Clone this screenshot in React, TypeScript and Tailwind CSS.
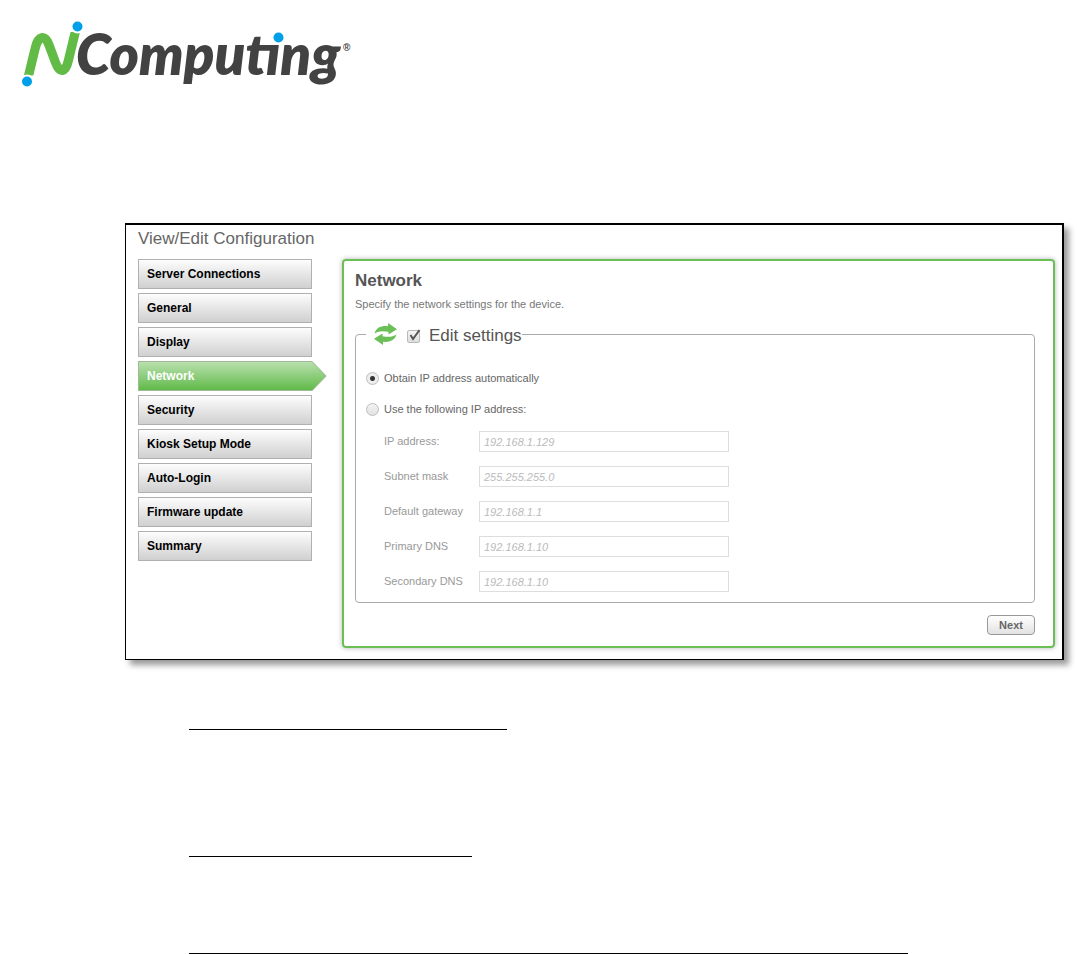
import React, { useState } from "react";

const SECTIONS = [
  "Server Connections",
  "General",
  "Display",
  "Network",
  "Security",
  "Kiosk Setup Mode",
  "Auto-Login",
  "Firmware update",
  "Summary",
];

const FIELDS = [
  { id: "ip", label: "IP address:", value: "192.168.1.129" },
  { id: "mask", label: "Subnet mask", value: "255.255.255.0" },
  { id: "gateway", label: "Default gateway", value: "192.168.1.1" },
  { id: "dns1", label: "Primary DNS", value: "192.168.1.10" },
  { id: "dns2", label: "Secondary DNS", value: "192.168.1.10" },
];

function Logo() {
  return (
    <svg className="overflow-visible" width="340" height="80" viewBox="20 20 340 80" role="img" aria-label="NComputing">
      <clipPath id="mark">
        <rect x="20" y="32" width="70" height="43.500" />
      </clipPath>
      <path
        clipPath="url(#mark)"
        d="M27.500 80 L35 49 C38 35 45 34.500 49 45 L55.500 62.500 C59.500 73.500 65.500 73.500 68.500 60 L76 29"
        fill="none"
        stroke="#62bb46"
        strokeWidth="9.200"
      />
      <circle cx="77.500" cy="26.500" r="7" fill="#fff" />
      <circle cx="77.500" cy="26.500" r="5" fill="#00a0e9" />
      <circle cx="27" cy="81.500" r="7" fill="#fff" />
      <circle cx="27" cy="81.500" r="5" fill="#00a0e9" />
      <text x="76" y="75" fontFamily="Lato, sans-serif" fontSize="56" fontWeight="800" fontStyle="italic" fill="#424242">
        Computing
      </text>
      <circle cx="277.500" cy="37.500" r="7.500" fill="#fff" />
      <circle cx="278.500" cy="37.500" r="5" fill="#00a0e9" />
      <text x="343" y="51" fontFamily="Liberation Sans, sans-serif" fontSize="10" fontWeight="700" fill="#424242">
        ®
      </text>
    </svg>
  );
}

function SwapIcon() {
  return (
    <svg width="23" height="22" viewBox="0 0 23 22" aria-hidden="true" fill="#6bbf57">
      <path d="M0.500 10.500 C2 5 7 2.500 14 3.200 V0 L23 6.200 L14.500 11.500 V8.800 C9 7.800 4 8 0.500 10.500Z" />
      <path d="M22.500 11.500 C21 17 16 19.500 9 18.800 V22 L0 15.800 L8.500 10.500 V13.200 C14 14.200 19 14 22.500 11.500Z" />
    </svg>
  );
}

function NavItem({ name, active, onSelect }: { name: string; active: boolean; onSelect: () => void }) {
  return (
    <li className="relative">
      <button
        type="button"
        onClick={onSelect}
        className={
          active
            ? "h-[30px] w-full border border-r-0 border-[#a0b89a] bg-linear-to-b from-[#b9e0ae] to-[#5fba46] px-2 text-left text-xs font-bold text-white"
            : "h-[30px] w-full border border-[#b0b0b0] bg-linear-to-b from-[#fdfdfd] to-[#d0d0d0] px-2 text-left text-xs font-bold text-black"
        }
      >
        {name}
      </button>
      {active && (
        <svg className="absolute top-0 left-full" width="15" height="30" viewBox="0 0 15 30" aria-hidden="true">
          <defs>
            <linearGradient id="arrow" x1="0" y1="0" x2="0" y2="1">
              <stop offset="0" stopColor="#b9e0ae" />
              <stop offset="1" stopColor="#5fba46" />
            </linearGradient>
          </defs>
          <path d="M0 0 L14.500 15 L0 30Z" fill="url(#arrow)" />
          <path d="M0 0.500 L14 15 L0 29.500" fill="none" stroke="#a0b89a" />
        </svg>
      )}
    </li>
  );
}

const radioClass =
  "size-[13px] shrink-0 appearance-none rounded-full border border-[#bdbdbd] bg-linear-to-b from-[#f2f2f2] to-[#e2e2e2] checked:bg-[radial-gradient(circle,#333_0_2px,#ededed_3px)]";

export default function App() {
  const [section, setSection] = useState("Network");
  const [edit, setEdit] = useState(true);
  const [mode, setMode] = useState("auto");

  return (
    <div className="min-h-screen bg-white font-['Liberation_Sans',Arial,sans-serif]">
      <header className="px-5 pt-5">
        <Logo />
      </header>

      <main className="mt-[123px] mr-[13px] ml-[125px] border-t-2 border-r-2 border-b border-l border-black bg-white pr-[7px] pb-[11px] pl-3 shadow-[5px_5px_6px_rgba(0,0,0,0.4)]">
        <h1 className="flex h-[34px] items-start pt-1 text-[17px] leading-5 text-[#666]">View/Edit Configuration</h1>
        <div className="flex items-start gap-[30px]">
          <nav aria-label="Configuration sections" className="w-[174px] shrink-0">
            <ul className="flex flex-col gap-1">
              {SECTIONS.map((name) => (
                <NavItem key={name} name={name} active={name === section} onSelect={() => setSection(name)} />
              ))}
            </ul>
          </nav>

          <section className="min-w-0 flex-1 rounded-[4px] border-2 border-[#6bbf57] pt-2 pr-[18px] pb-[11px] pl-[11px] shadow-[0_0_5px_rgba(0,0,0,0.3)]">
            <h2 className="text-[17px] leading-6 font-bold text-[#555]">{section}</h2>
            <p className="text-[11px] leading-[22px] text-[#777]">Specify the network settings for the device.</p>

            <fieldset className="mt-[7px] rounded-[4px] border border-[#aaa] px-[10px] pb-[3px]">
              <legend className="flex h-6 items-center pl-2">
                <SwapIcon />
                <span className="relative ml-[10px] flex pt-1">
                  <input
                    id="edit"
                    type="checkbox"
                    checked={edit}
                    onChange={(e) => setEdit(e.target.checked)}
                    className="size-[13px] appearance-none rounded-[2px] border border-[#bbb] bg-linear-to-b from-[#f5f5f5] to-[#dedede]"
                  />
                  {edit && (
                    <svg className="pointer-events-none absolute top-0.5 left-0" width="15" height="14" viewBox="0 0 15 14" aria-hidden="true">
                      <path d="M3.500 7 L6 11 L12.500 2" fill="none" stroke="#555" strokeWidth="2" />
                    </svg>
                  )}
                </span>
                <label htmlFor="edit" className="pt-1 pl-[9px] text-[17px] leading-5 text-[#555]">
                  Edit settings
                </label>
              </legend>

              <div className="h-[78px] pt-[17px] text-[11px] text-[#666]">
                <label className="flex h-[31px] items-center gap-[5px]">
                  <input type="radio" name="mode" checked={mode === "auto"} onChange={() => setMode("auto")} className={radioClass} />
                  Obtain IP address automatically
                </label>
                <label className="flex h-[31px] items-center gap-[5px]">
                  <input type="radio" name="mode" checked={mode === "manual"} onChange={() => setMode("manual")} className={radioClass} />
                  Use the following IP address:
                </label>
              </div>

              <div className="pl-[18px]">
                {FIELDS.map((f) => (
                  <div key={f.id} className="flex h-[35px] items-center text-[11px]">
                    <label htmlFor={f.id} className="w-[95px] shrink-0 text-[#999]">
                      {f.label}
                    </label>
                    <input
                      id={f.id}
                      type="text"
                      defaultValue={f.value}
                      disabled={mode === "auto"}
                      className="h-[21px] w-[250px] border border-[#ddd] bg-white px-1 text-[11px] text-[#bbb] italic"
                    />
                  </div>
                ))}
              </div>
            </fieldset>

            <div className="mt-3 flex justify-end">
              <button
                type="button"
                className="h-5 w-12 rounded-[4px] border border-[#999] bg-linear-to-b from-white to-[#e2e2e2] text-[11px] leading-none font-bold text-[#666]"
              >
                Next
              </button>
            </div>
          </section>
        </div>
      </main>

      <div className="pt-[69px] pl-[189px]">
        <div className="h-px w-[318px] bg-black" />
        <div className="mt-[126px] h-px w-[283px] bg-black" />
        <div className="mt-[96px] h-px w-[719px] bg-black" />
      </div>
    </div>
  );
}
